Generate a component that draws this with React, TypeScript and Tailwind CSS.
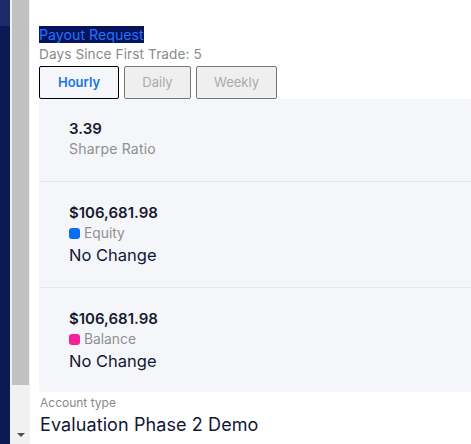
import { useState } from "react";

type Stat = {
  value: string;
  label: string;
  dot?: string;
  change?: string;
};

const stats: Array<Stat> = [
  { value: "3.39", label: "Sharpe Ratio" },
  { value: "$106,681.98", label: "Equity", dot: "bg-[#0b6cf5]", change: "No Change" },
  { value: "$106,681.98", label: "Balance", dot: "bg-[#f7209a]", change: "No Change" },
];

const ranges = ["Hourly", "Daily", "Weekly"];

const App = () => {
  const [range, setRange] = useState<string>("Hourly");

  return (
    <div className="flex h-[444px] w-[471px] overflow-hidden bg-white font-['Inter',sans-serif]">
      {/* sidebar edge */}
      <div className="flex w-[10px] flex-col">
        <div className="h-[26px] bg-[#1c2a6a]"></div>
        <div className="flex-1 bg-[#0b1a54]"></div>
      </div>
      {/* scrollbar */}
      <div className="flex w-[20px] flex-col bg-[#f1f1f1] pl-[2px] pr-[1px]">
        <div className="h-[385px] bg-[#c1c1c1]"></div>
        <div className="flex flex-1 items-end justify-center pb-[7px]">
          <div className="h-0 w-0 border-x-[4px] border-t-[4px] border-x-transparent border-t-[#505050]"></div>
        </div>
      </div>

      <div className="flex min-w-0 flex-1 flex-col pl-[9px] pt-[25px]">
        <div className="leading-[18px]">
          <span className="bg-[#07145c] text-[14.2px] leading-[18px] text-[#1f73ff]">Payout Request</span>
        </div>
        <div className="text-[13.6px] leading-[20px] tracking-[0.1px] text-[#8a8a8a]">Days Since First Trade: 5</div>

        <div className="mt-[2px] flex gap-[5px]">
          {ranges.map((r) => (
            <button
              key={r}
              onClick={() => setRange(r)}
              className={
                r === range
                  ? "h-[33px] w-[80px] rounded-[2px] border border-black bg-[#f5f6fa] text-[13px] font-semibold text-[#1a73e8]"
                  : "h-[33px] rounded-[2px] border border-[#767676] bg-[#efefef] text-[13px] text-[#aaaaaa] " +
                    (r === "Daily" ? "w-[67px]" : "w-[81px]")
              }
            >
              {r}
            </button>
          ))}
        </div>

        <div className="mr-[-20px] rounded-[4px] bg-[#f5f6fa]">
          {stats.map((s, idx) => (
            <div
              key={idx}
              className={
                idx === 0
                  ? "h-[83px] border-b border-[#e6e8ee] pl-[30px] pt-[20px]"
                  : idx === 1
                  ? "h-[106px] border-b border-[#e6e8ee] pl-[30px] pt-[21px]"
                  : "h-[104px] pl-[30px] pt-[21px]"
              }
            >
              <div className="text-[15px] font-semibold leading-[20px] text-[#181b2e]">{s.value}</div>
              {s.dot ? (
                <div className="flex items-center gap-[4px] text-[13.8px] leading-[20px] text-[#8f8f8f]">
                  <span className={"h-[11px] w-[11px] rounded-[3px] " + s.dot}></span>
                  {s.label}
                </div>
              ) : (
                <div className="text-[14px] leading-[20px] tracking-[0.2px] text-[#8f8f8f]">{s.label}</div>
              )}
              {s.change && (
                <div className="mt-[1px] text-[16.5px] leading-[22px] text-[#111633]">{s.change}</div>
              )}
            </div>
          ))}
        </div>

        <div className="mt-[3px] pl-[1px] text-[12px] leading-[16px] text-[#8a8a8a]">Account type</div>
        <div className="mt-[2px] pl-[1px] text-[18px] leading-[24px] tracking-[0.1px] text-[#111633]">Evaluation Phase 2 Demo</div>
      </div>
    </div>
  );
};

export default App;
